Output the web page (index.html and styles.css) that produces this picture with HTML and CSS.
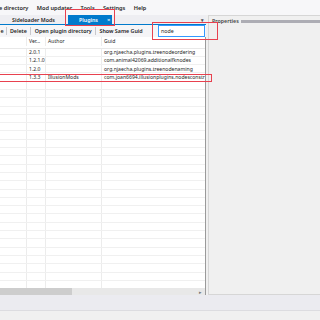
FILE: index.html
```html
<!DOCTYPE html>
<html lang="en">
<head>
  <meta charset="UTF-8">
  <meta name="viewport" content="width=device-width, initial-scale=1.0">
  <title>Plugins</title>
  <link rel="stylesheet" href="styles.css">
</head>
<body>
  <div class="window">
    <div class="menubar">
      <span class="menu-item first">e directory</span>
      <span class="menu-item">Mod updater</span>
      <span class="menu-item">Tools</span>
      <span class="menu-item">Settings</span>
      <span class="menu-item">Help</span>
    </div>

    <div class="workspace">
      <div class="doc-panel">
        <div class="tabstrip">
          <div class="tab">Sideloader Mods</div>
          <div class="tab active">Plugins <span class="tab-close">×</span></div>
          <div class="tab-dropdown">▾</div>
        </div>

        <div class="toolbar">
          <span class="tool-btn cut">e</span>
          <span class="tool-sep"></span>
          <span class="tool-btn">Delete</span>
          <span class="tool-sep"></span>
          <span class="tool-btn">Open plugin directory</span>
          <span class="tool-sep"></span>
          <span class="tool-btn">Show Same Guid</span>
          <div class="search">node</div>
        </div>

        <div class="list">
          <div class="row header">
            <div class="cell c0"></div>
            <div class="cell c1">Ver...</div>
            <div class="cell c2">Author</div>
            <div class="cell c3">Guid</div>
          </div>
          <div class="list-body" id="list-body">
            <div class="row">
              <div class="cell c0"></div>
              <div class="cell c1">2.0.1</div>
              <div class="cell c2"></div>
              <div class="cell c3">org.njaecha.plugins.treenodeordering</div>
            </div>
            <div class="row">
              <div class="cell c0"></div>
              <div class="cell c1">1.2.1.0</div>
              <div class="cell c2"></div>
              <div class="cell c3">com.animal42069.additionalfknodes</div>
            </div>
            <div class="row">
              <div class="cell c0"></div>
              <div class="cell c1">1.2.0</div>
              <div class="cell c2"></div>
              <div class="cell c3">org.njaecha.plugins.treenodenaming</div>
            </div>
            <div class="row">
              <div class="cell c0"></div>
              <div class="cell c1">1.3.3</div>
              <div class="cell c2">IllusionMods</div>
              <div class="cell c3">com.joan6694.illusionplugins.nodesconstr</div>
            </div>
          </div>
          <div class="hscroll">
            <div class="hscroll-thumb"></div>
            <span class="hscroll-arrow">▸</span>
          </div>
        </div>
      </div>

      <div class="props-panel">
        <div class="props-title">
          <span>Properties</span>
          <span class="grip"></span>
        </div>
        <div class="props-body"></div>
      </div>
    </div>

    <div class="statusbar"></div>
    <div class="footer"></div>

    <!-- red markers drawn over the screenshot -->
    <div class="mark mark-tab"></div>
    <div class="mark mark-search"></div>
    <div class="mark mark-row"></div>
  </div>

  <script>
    // empty rows to fill the list
    const body = document.getElementById('list-body');
    for (let i = 0; i < 26; i++) {
      const row = document.createElement('div');
      row.className = 'row';
      row.innerHTML = '<div class="cell c0"></div><div class="cell c1"></div><div class="cell c2"></div><div class="cell c3"></div>';
      body.appendChild(row);
    }
  </script>
</body>
</html>
```

FILE: styles.css
```css
body {
  margin: 0;
  padding: 0;
  background-color: #f0f0f0;
  font-family: 'Noto Sans', 'Open Sans', sans-serif;
  color: #1e1e1e;
}

.window {
  position: relative;
  width: 320px;
  height: 320px;
  overflow: hidden;
  display: flex;
  flex-direction: column;
}

/* menu */
.menubar {
  height: 15px;
  flex: none;
  display: flex;
  align-items: center;
  background-color: #f7f7f9;
  font-size: 5.6px;
  font-weight: 600;
  white-space: nowrap;
}

.menu-item {
  padding: 0 4.2px;
}

.menu-item.first {
  padding-left: 0;
  margin-left: -1px;
}

/* main area */
.workspace {
  height: 280px;
  flex: none;
  display: flex;
  gap: 2px;
}

.doc-panel {
  width: 206px;
  flex: none;
  display: flex;
  flex-direction: column;
  background-color: #eeeef2;
}

.tabstrip {
  height: 9px;
  flex: none;
  display: flex;
  align-items: stretch;
  border-bottom: 1px solid #007acc;
  font-size: 5.3px;
  font-weight: 600;
  white-space: nowrap;
}

.tab {
  display: flex;
  align-items: center;
}

.tab:first-child {
  padding-left: 12px;
  width: 68px;
  box-sizing: border-box;
}

.tab.active {
  background-color: #007acc;
  color: #fff;
  width: 44px;
  box-sizing: border-box;
  padding: 0 0 0 11px;
}

.tab-close {
  margin-left: 9px;
  font-size: 6px;
  font-weight: 400;
}

.tab-dropdown {
  margin-left: auto;
  margin-right: 2px;
  font-size: 5px;
  color: #555;
  display: flex;
  align-items: center;
}

.toolbar {
  height: 12px;
  flex: none;
  display: flex;
  align-items: center;
  background-color: #f5f5f7;
  font-size: 5.35px;
  font-weight: 600;
  white-space: nowrap;
}

.tool-btn {
  padding: 0 3.4px;
}

.tool-btn.cut {
  margin-left: -3px;
  padding-right: 2px;
}

.tool-sep {
  width: 1px;
  height: 8px;
  background-color: #c8c8cc;
}

.search {
  margin-left: auto;
  margin-right: 1px;
  width: 47px;
  height: 12px;
  box-sizing: border-box;
  border: 1px solid #3399ff;
  background-color: #fff;
  font-size: 5.3px;
  font-weight: 400;
  padding-left: 2px;
  display: flex;
  align-items: center;
}

/* plugin list */
.list {
  height: 258px;
  flex: none;
  display: flex;
  flex-direction: column;
  background-color: #fff;
  border-right: 1px solid #9a9a9a;
  border-bottom: 1px solid #b8b8b8;
  overflow: hidden;
}

.row {
  display: flex;
  height: 8.3px;
  flex: none;
  border-bottom: 1px solid #f0f0f0;
  box-sizing: border-box;
  font-size: 5.1px;
  white-space: nowrap;
}

.row.header {
  height: 11.5px;
  padding-bottom: 2px;
  border-bottom: 1px solid #e8e8e8;
}

.list-body {
  flex: 1;
  overflow: hidden;
}

.cell {
  display: flex;
  align-items: center;
  padding-left: 2px;
  border-right: 1px solid #ececec;
  box-sizing: border-box;
  overflow: hidden;
}

.c0 { width: 27px; }
.c1 { width: 19px; }
.c2 { width: 56px; }
.c3 { flex: 1; border-right: none; }

.hscroll {
  height: 7px;
  flex: none;
  display: flex;
  align-items: stretch;
  background-color: #e8e8e8;
}

.hscroll-thumb {
  width: 72px;
  background-color: #cdcdcd;
}

.hscroll-arrow {
  margin-left: auto;
  margin-right: 3px;
  font-size: 5px;
  color: #777;
  display: flex;
  align-items: center;
}

/* properties pane */
.props-panel {
  flex: 1;
  display: flex;
  flex-direction: column;
  border: 1px solid #d6d6d6;
  border-right: none;
  background-color: #f0f0f0;
}

.props-title {
  height: 10px;
  flex: none;
  display: flex;
  align-items: center;
  gap: 2px;
  padding-left: 3px;
  font-size: 5.3px;
  font-weight: 600;
  color: #444;
  white-space: nowrap;
}

.grip {
  flex: 1;
  height: 3px;
  background-image: radial-gradient(#a8a8b0 0.7px, transparent 0.8px);
  background-size: 2px 2px;
}

.props-body {
  flex: 1;
}

.statusbar {
  height: 15px;
  flex: none;
  background-color: #ebebf0;
  border-bottom: 1px solid #dcdce0;
}

.footer {
  flex: 1;
  background-color: #f0f0f0;
}

/* red annotation boxes */
.mark {
  position: absolute;
  border: 1px solid #e8414f;
  box-sizing: border-box;
}

.mark-tab {
  left: 65px;
  top: 9px;
  width: 50px;
  height: 17px;
}

.mark-search {
  left: 152px;
  top: 22px;
  width: 66px;
  height: 18px;
}

.mark-row {
  left: -1px;
  top: 74px;
  width: 213px;
  height: 8px;
}
```
